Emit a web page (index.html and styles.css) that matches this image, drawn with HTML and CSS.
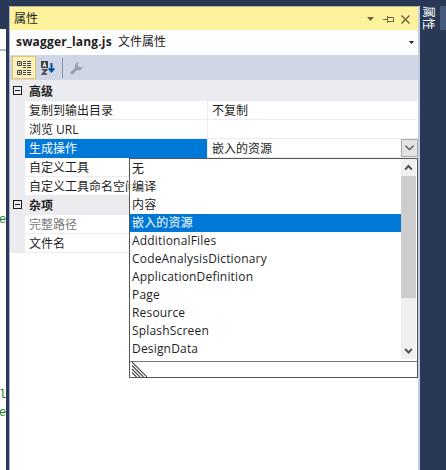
FILE: index.html
```html
<!DOCTYPE html>
<html lang="zh-CN">
<head>
  <meta charset="UTF-8">
  <title>属性</title>
  <link rel="stylesheet" href="styles.css">
</head>
<body>
  <div class="window">
    <div class="editor">
      <div class="editor-tabs"></div>
      <div class="editor-bar"></div>
      <div class="editor-code">
        <span class="code-a">e</span>
        <span class="code-b">l</span>
        <span class="code-c">e</span>
      </div>
    </div>

    <div class="panel">
      <div class="title-bar">
        <span class="title">属性</span>
        <svg class="title-icons" width="50" height="12" viewBox="0 0 50 12">
          <path d="M4 4h7l-3.5 4z" fill="#75633d"/>
          <path d="M20 6.5h4M24.5 3v7M24.5 4.5h6v4.5M24.5 8.5h6" fill="none" stroke="#75633d"/>
          <path d="M38.5 2.5l8 8M46.500 2.5l-8 8" fill="none" stroke="#75633d" stroke-width="1.5"/>
        </svg>
      </div>

      <div class="object-bar">
        <span class="file-name">swagger_lang.js</span>
        <span class="file-kind">文件属性</span>
        <svg class="object-arrow" width="5" height="3" viewBox="0 0 5 3"><path d="M0 0h5L2.500 3z" fill="#1e1e1e"/></svg>
      </div>

      <div class="toolbar">
        <span class="tool active">
          <svg width="16" height="16" viewBox="0 0 16 16">
            <path d="M1.500 1.500h4v4h-4zM1.500 10.500h4v4h-4z" fill="#fff8d0" stroke="#424242"/>
            <path d="M2.500 3.500h2M3.500 2.500v2M2.500 12.500h2M3.500 11.500v2" stroke="#424242"/>
            <path d="M7 1.500h8M7 3.500h8M7 5.500h8M7 7.500h8M7 10.500h8M7 12.500h8M7 14.500h8" stroke="#424242" stroke-dasharray="3 1 4 0"/>
          </svg>
        </span>
        <span class="tool">
          <svg width="16" height="16" viewBox="0 0 16 16">
            <path d="M1 1h7v7H1z" fill="#424242"/>
            <path d="M3 7l1.500-4.500L6 7M3.300 5.500h2.400" fill="none" stroke="#fff"/>
            <path d="M2 9.800h4.500L2.500 14h4.500" fill="none" stroke="#424242" stroke-width="1.600"/>
            <path d="M11.500 3v8M8.800 8.300l2.700 3.200 2.700-3.200" fill="none" stroke="#00539c" stroke-width="2"/>
          </svg>
        </span>
        <span class="separator"></span>
        <span class="tool">
          <svg width="16" height="16" viewBox="0 0 16 16">
            <path d="M3 13l5-5" stroke="#9a9fa9" stroke-width="3" stroke-linecap="round"/>
            <path d="M10 2.200A4 4 0 1 0 13.800 6L11.500 7.500 8.800 6.500 8.500 4z" fill="#9a9fa9"/>
          </svg>
        </span>
      </div>

      <div class="grid">
        <div class="category"><span class="toggle"></span>高级</div>
        <div class="row"><span class="name">复制到输出目录</span><span class="value">不复制</span></div>
        <div class="row"><span class="name">浏览 URL</span><span class="value"></span></div>
        <div class="row selected">
          <span class="name">生成操作</span>
          <span class="value">嵌入的资源</span>
          <span class="combo">
            <svg width="9" height="6" viewBox="0 0 9 6"><path d="M.5.700l4 4 4-4" fill="none" stroke="#555" stroke-width="1.300"/></svg>
          </span>
          <div class="dropdown">
            <div class="list">
              <ul class="options">
                <li>无</li>
                <li>编译</li>
                <li>内容</li>
                <li class="current">嵌入的资源</li>
                <li>AdditionalFiles</li>
                <li>CodeAnalysisDictionary</li>
                <li>ApplicationDefinition</li>
                <li>Page</li>
                <li>Resource</li>
                <li>SplashScreen</li>
                <li>DesignData</li>
              </ul>
              <div class="scrollbar">
                <svg width="15" height="17" viewBox="0 0 15 17"><path d="M4.200 10.500l3.300-3.500 3.300 3.500" fill="none" stroke="#505050" stroke-width="1.900"/></svg>
                <div class="thumb"></div>
                <svg width="15" height="16" viewBox="0 0 15 16"><path d="M4.200 6l3.300 3.500L10.800 6" fill="none" stroke="#505050" stroke-width="1.900"/></svg>
              </div>
            </div>
            <div class="resize">
              <svg width="16" height="15" viewBox="0 0 16 15"><path d="M1 0l15 15M1 3.500L12.500 15M1 7l8 8M1 10.500L5.500 15" fill="none" stroke="#444" stroke-width="1.100"/></svg>
            </div>
          </div>
        </div>
        <div class="row"><span class="name">自定义工具</span><span class="value"></span></div>
        <div class="row"><span class="name">自定义工具命名空间</span><span class="value"></span></div>
        <div class="category"><span class="toggle"></span>杂项</div>
        <div class="row disabled"><span class="name">完整路径</span><span class="value"></span></div>
        <div class="row"><span class="name">文件名</span><span class="value"></span></div>
      </div>
    </div>

    <div class="dock">
      <span class="dock-tab">属性</span>
      <span class="dock-mark"></span>
    </div>
  </div>
</body>
</html>
```
FILE: styles.css
```css
* {
  box-sizing: border-box;
}
body {
  margin: 0;
  background: #293955;
  color: #1e1e1e;
  font: 12px/18px "Open Sans", "Noto Sans CJK SC", sans-serif;
}
.window {
  display: flex;
  width: 446px;
  height: 470px;
  overflow: hidden;
}

/* editor edge on the left */
.editor {
  display: flex;
  flex-direction: column;
  width: 6px;
  margin-right: 3px;
}
.editor-tabs {
  height: 29px;
}
.editor-bar {
  height: 22px;
  background: #fcfcfc;
  border-bottom: 2px solid #b0c0cb;
}
.editor-code {
  display: flex;
  flex-direction: column;
  flex: 1;
  padding-top: 160px;
  background: #fff;
  color: #108010;
  font: 12px/18px "Liberation Mono", monospace;
}
.editor-code span {
  margin-left: -1px;
}
.code-b {
  margin-top: 157px;
}

/* properties panel */
.panel {
  display: flex;
  flex-direction: column;
  width: 411px;
  margin-top: 6px;
  border-left: 1px solid #a9b5d3;
  border-right: 2px solid #c5cde0;
  background: #fff;
}
.title-bar {
  display: flex;
  align-items: center;
  justify-content: space-between;
  height: 24px;
  padding: 0 5px 0 4px;
  border-top: 1px solid #bcb490;
  background: #fff29d;
}
.title {
  padding-top: 1px;
}
.object-bar {
  display: flex;
  align-items: center;
  height: 25px;
  padding: 0 4px 1px 6px;
  background: #fdfdfd;
}
.file-name {
  width: 102px;
  font-weight: 700;
  letter-spacing: 0.18px;
  white-space: nowrap;
}
.object-arrow {
  margin-left: auto;
}
.toolbar {
  display: flex;
  align-items: center;
  height: 25px;
  padding-left: 2px;
  background: #cfd6e5;
}
.tool {
  display: flex;
  align-items: center;
  justify-content: center;
  width: 24px;
  height: 23px;
}
.tool.active {
  border: 1px solid #e5c365;
  background: #fff0c0;
}
.separator {
  width: 1px;
  height: 20px;
  margin: 0 2px;
  background: #8591a9;
}

/* property grid */
.grid {
  padding-top: 2px;
  background: #ececf0;
}
.category {
  display: flex;
  align-items: center;
  height: 19px;
  font-weight: 700;
}
.toggle {
  width: 9px;
  height: 9px;
  margin: 0 7px 2px 3px;
  border: 1px solid #1e1e1e;
  background: linear-gradient(#1e1e1e, #1e1e1e) center / 5px 1px no-repeat;
}
.row {
  position: relative;
  display: flex;
  height: 19px;
  margin-left: 15px;
  border-bottom: 1px solid #ececf0;
  background: #fff;
  line-height: 20px;
}
.name {
  width: 183px;
  padding-left: 4px;
  border-right: 1px solid #ececf0;
  white-space: nowrap;
}
.value {
  flex: 1;
  padding-left: 4px;
}
.disabled .name {
  color: #7a7a7a;
}
.selected .name {
  height: 19px;
  background: #0078d7;
  color: #fff;
}
.combo {
  display: flex;
  align-items: center;
  justify-content: center;
  width: 17px;
  height: 18px;
  border: 1px solid #acacac;
  background: #e3e3e3;
}

/* build action list */
.dropdown {
  position: absolute;
  top: 19px;
  left: 104px;
  z-index: 1;
  width: 289px;
  height: 220px;
  border: 1px solid #555;
  background: #fff;
  line-height: 18px;
}
.list {
  display: flex;
  height: 203px;
  border-bottom: 1px solid #777;
}
.options {
  flex: 1;
  margin: 0;
  padding: 1px 0 0;
  list-style: none;
  letter-spacing: 0.18px;
}
.options li {
  height: 18px;
  padding-left: 2px;
}
.options .current {
  background: #0078d7;
  color: #fff;
}
.scrollbar {
  display: flex;
  flex-direction: column;
  width: 15px;
  height: 200px;
  margin-right: 1px;
  background: #f0f0f0;
}
.thumb {
  height: 122px;
  margin-bottom: auto;
  background: #cdcdcd;
}
.resize {
  display: flex;
  padding-left: 1px;
}

/* auto-hide strip on the right */
.dock {
  display: flex;
  justify-content: space-between;
  flex: 1;
  padding-top: 6px;
}
.dock-tab {
  width: 16px;
  height: 24px;
  color: #fff;
  line-height: 16px;
  writing-mode: vertical-rl;
  text-orientation: sideways;
}
.dock-mark {
  width: 6px;
  height: 24px;
  background: #465a7d;
}
```
